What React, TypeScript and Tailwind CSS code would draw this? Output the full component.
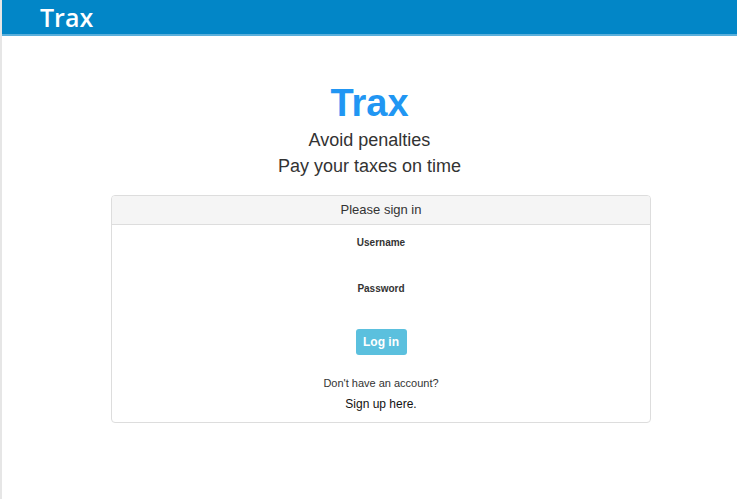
export default function App() {
  return (
    <div className="min-h-[499px] w-full bg-white border-l-2 border-[#e6e6e6]" style={{ fontFamily: '"Liberation Sans", Arial, sans-serif' }}>
      <div className="h-[34px] bg-[#0286c7] flex items-center pl-[38px]">
        <span className="text-white text-[25px] font-semibold leading-none" style={{ fontFamily: '"Open Sans", sans-serif' }}>Trax</span>
      </div>
      <div className="h-[2px] bg-[#5aafdb]" />
      <div className="flex flex-col items-center pt-[44px]">
        <div className="text-[#2196f3] text-[38px] font-bold leading-[46px]">Trax</div>
        <div className="text-[#333] text-[18px] leading-[26px] mt-[1px]">Avoid penalties</div>
        <div className="text-[#333] text-[18px] leading-[26px]">Pay your taxes on time</div>
      </div>
      <div className="mt-[16px] w-[540px] ml-[109px] border border-[#dddddd] rounded-[4px] overflow-hidden">
        <div className="h-[29px] bg-[#f5f5f5] border-b border-[#dddddd] flex items-center justify-center text-[13px] text-[#333]">Please sign in</div>
        <div className="flex flex-col items-center pt-[11px] pb-[10px]">
          <div className="text-[10px] font-bold text-[#333] leading-[14px]">Username</div>
          <div className="text-[10px] font-bold text-[#333] leading-[14px] mt-[32px]">Password</div>
          <button className="mt-[33px] h-[26px] w-[51px] rounded-[3px] bg-[#5bc0de] text-white text-[12px] font-bold">Log in</button>
          <div className="text-[11px] text-[#333] mt-[21px] leading-[14px]">Don't have an account?</div>
          <div className="text-[12px] text-[#111] mt-[6px] leading-[16px]">Sign up here.</div>
        </div>
      </div>
    </div>
  );
}
